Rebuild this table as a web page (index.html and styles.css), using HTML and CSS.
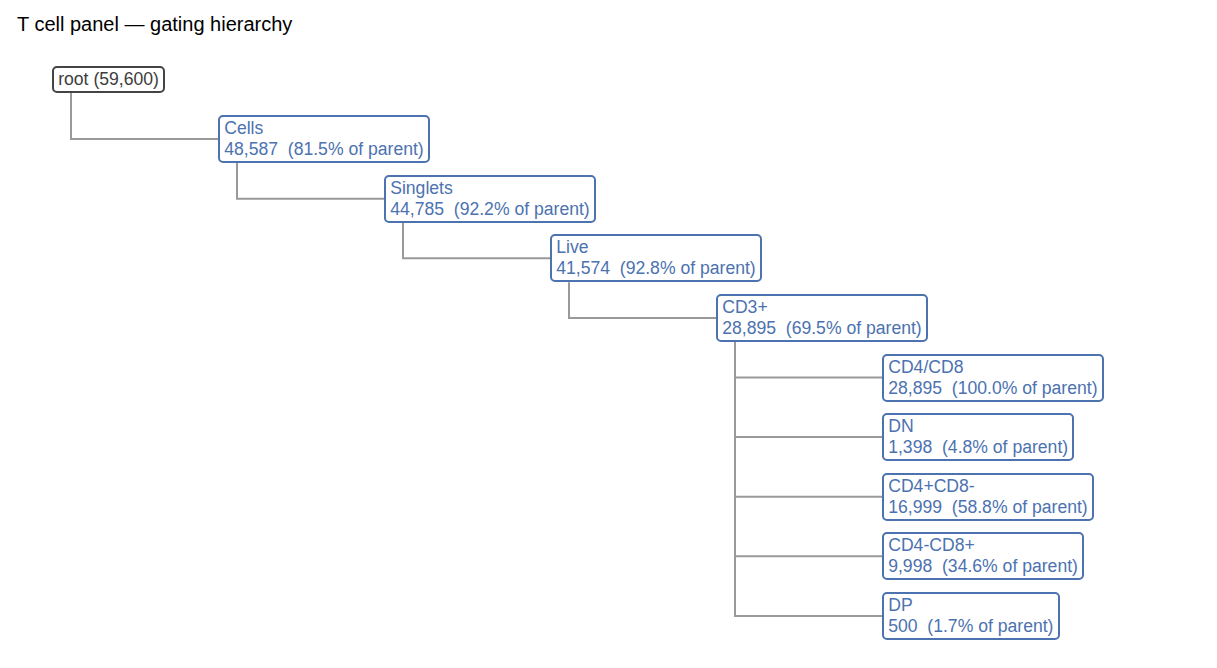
FILE: index.html
```html
<!DOCTYPE html>
<html lang="en">
<head>
<meta charset="utf-8">
<title>T cell panel — gating hierarchy</title>
<link rel="stylesheet" href="styles.css">
</head>
<body>
<div class="figure">
  <h1 class="title">T cell panel — gating hierarchy</h1>
  <div class="tree">
    <svg class="links" width="1217" height="628" viewBox="0 40 1217 628" aria-hidden="true">
      <g fill="none" stroke="#999999" stroke-width="2">
        <polyline points="71,93 71,139.1 218,139.1"/>
        <polyline points="237,163 237,198.7 384,198.7"/>
        <polyline points="403,222.7 403,258.3 550,258.3"/>
        <polyline points="569,282.3 569,317.9 716,317.9"/>
        <polyline points="735,341.9 735,615.9"/>
        <line x1="735" y1="377.5" x2="882" y2="377.5"/>
        <line x1="735" y1="437.1" x2="882" y2="437.1"/>
        <line x1="735" y1="496.7" x2="882" y2="496.7"/>
        <line x1="735" y1="556.3" x2="882" y2="556.3"/>
        <line x1="734" y1="615.9" x2="882" y2="615.9"/>
      </g>
    </svg>
    <div class="node node-root" style="left:52px;top:26px">root (59,600)</div>
    <div class="node" style="left:218px;top:75.1px">Cells
48,587  (81.5% of parent)</div>
    <div class="node" style="left:384px;top:134.7px">Singlets
44,785  (92.2% of parent)</div>
    <div class="node" style="left:550px;top:194.3px">Live
41,574  (92.8% of parent)</div>
    <div class="node" style="left:716px;top:253.9px">CD3+
28,895  (69.5% of parent)</div>
    <div class="node" style="left:882px;top:313.5px">CD4/CD8
28,895  (100.0% of parent)</div>
    <div class="node" style="left:882px;top:373.1px">DN
1,398  (4.8% of parent)</div>
    <div class="node" style="left:882px;top:432.7px">CD4+CD8-
16,999  (58.8% of parent)</div>
    <div class="node" style="left:882px;top:492.3px">CD4-CD8+
9,998  (34.6% of parent)</div>
    <div class="node" style="left:882px;top:551.9px">DP
500  (1.7% of parent)</div>
  </div>
</div>
</body>
</html>
```

FILE: styles.css
```css
html, body {
  margin: 0;
  padding: 0;
  background: #ffffff;
}

.figure {
  width: 1217px;
  height: 668px;
  overflow: hidden;
  font-family: "Liberation Sans", Arial, sans-serif;
}

.title {
  margin: 0;
  padding: 12px 0 0 17px;
  height: 40px;
  box-sizing: border-box;
  font-size: 20px;
  line-height: 24px;
  font-weight: normal;
  color: #000000;
  white-space: nowrap;
}

.tree {
  position: relative;
  width: 1217px;
  height: 628px;
}

.links {
  position: absolute;
  left: 0;
  top: 0;
}

.node {
  position: absolute;
  box-sizing: border-box;
  border: 2px solid #4c72b0;
  border-radius: 5px;
  padding: 1px 4.2px;
  background: #ffffff;
  color: #4c72b0;
  font-size: 17.6px;
  line-height: 21px;
  white-space: pre;
}

.node-root {
  border-color: #444444;
  color: #3d3d3d;
}
```
